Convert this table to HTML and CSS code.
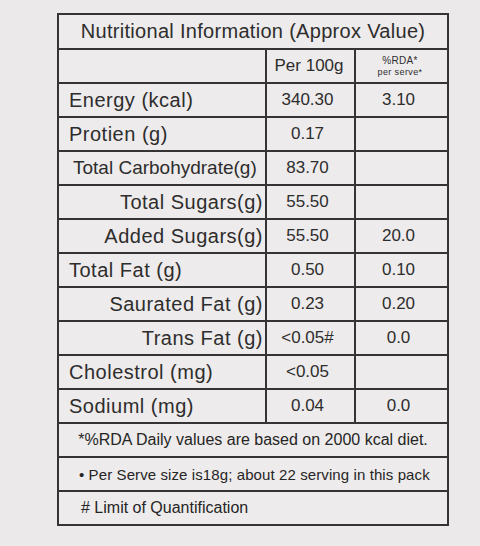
FILE: index.html
```html
<!DOCTYPE html>
<html lang="en">
<head>
  <meta charset="UTF-8" />
  <meta name="viewport" content="width=device-width, initial-scale=1.0"/>
  <title>Nutritional Information</title>
  <link rel="stylesheet" href="styles.css">
</head>
<body>

  <!-- Nutrition label -->
  <table class="label">
    <colgroup>
      <col class="col-name">
      <col class="col-value">
      <col class="col-rda">
    </colgroup>
    <tr class="title-row">
      <th colspan="3">Nutritional Information (Approx Value)</th>
    </tr>
    <tr class="head-row">
      <td></td>
      <td class="per">Per 100g</td>
      <td class="rda-head">
        <span class="rda-top">%RDA*</span>
        <span class="rda-sub">per serve*</span>
      </td>
    </tr>
    <tr>
      <td class="name">Energy (kcal)</td>
      <td class="val">340.30</td>
      <td class="rda">3.10</td>
    </tr>
    <tr>
      <td class="name">Protien (g)</td>
      <td class="val">0.17</td>
      <td class="rda"></td>
    </tr>
    <tr>
      <td class="name carb">Total Carbohydrate(g)</td>
      <td class="val">83.70</td>
      <td class="rda"></td>
    </tr>
    <tr>
      <td class="name sub">Total Sugars(g)</td>
      <td class="val">55.50</td>
      <td class="rda"></td>
    </tr>
    <tr>
      <td class="name sub">Added Sugars(g)</td>
      <td class="val">55.50</td>
      <td class="rda">20.0</td>
    </tr>
    <tr>
      <td class="name">Total Fat (g)</td>
      <td class="val">0.50</td>
      <td class="rda">0.10</td>
    </tr>
    <tr>
      <td class="name sub">Saurated Fat (g)</td>
      <td class="val">0.23</td>
      <td class="rda">0.20</td>
    </tr>
    <tr>
      <td class="name sub">Trans Fat (g)</td>
      <td class="val">&lt;0.05#</td>
      <td class="rda">0.0</td>
    </tr>
    <tr>
      <td class="name">Cholestrol (mg)</td>
      <td class="val">&lt;0.05</td>
      <td class="rda"></td>
    </tr>
    <tr>
      <td class="name">Sodiuml (mg)</td>
      <td class="val">0.04</td>
      <td class="rda">0.0</td>
    </tr>
    <tr class="note-row">
      <td colspan="3" class="note center">*%RDA Daily values are based on 2000 kcal diet.</td>
    </tr>
    <tr class="note-row">
      <td colspan="3" class="note serve">&bull; Per Serve size is18g; about 22 serving in this pack</td>
    </tr>
    <tr class="note-row">
      <td colspan="3" class="note">&#35; Limit of Quantification</td>
    </tr>
  </table>

</body>
</html>
```
FILE: styles.css
```css
* {
  box-sizing: border-box;
  margin: 0;
  padding: 0;
}
body {
  background-color: #ebe9e9;
  font-family: "Liberation Sans", Arial, sans-serif;
  color: #2e2d2d;
  padding: 13px 0 0 57px;
}
.label {
  border-collapse: collapse;
  table-layout: fixed;
  width: 390px;
  background-color: #edebeb;
}
.col-name {
  width: 208px;
}
.col-value {
  width: 89px;
}
.col-rda {
  width: 93px;
}
.label th,
.label td {
  border: 2px solid #353434;
  height: 34px;
  vertical-align: middle;
}
.title-row th {
  height: 35px;
  font-size: 20px;
  letter-spacing: 0.3px;
  font-weight: normal;
  text-align: center;
}
.per {
  font-size: 17px;
  text-align: center;
  padding-right: 3px;
}
.rda-head {
  text-align: center;
  line-height: 1;
  padding-right: 3px;
}
.rda-top {
  display: block;
  font-size: 10px;
  letter-spacing: 0.3px;
  margin-bottom: 2px;
}
.rda-sub {
  display: block;
  font-size: 9px;
  letter-spacing: 0.4px;
}
.name {
  font-size: 20px;
  letter-spacing: 0.5px;
  padding-left: 10px;
  white-space: nowrap;
}
.name.carb {
  font-size: 19px;
  letter-spacing: 0;
  padding-left: 14px;
}
.name.sub {
  text-align: right;
  padding-left: 0;
  padding-right: 2px;
}
.val {
  font-size: 17px;
  text-align: center;
  padding-right: 6px;
}
.rda {
  font-size: 17px;
  text-align: center;
  padding-right: 6px;
}
.note {
  font-size: 16px;
  padding-left: 22px;
  color: #262525;
  white-space: nowrap;
}
.note.serve {
  font-size: 15px;
  letter-spacing: 0.1px;
  padding-left: 20px;
}
.note.center {
  text-align: center;
  padding-left: 0;
}
```
